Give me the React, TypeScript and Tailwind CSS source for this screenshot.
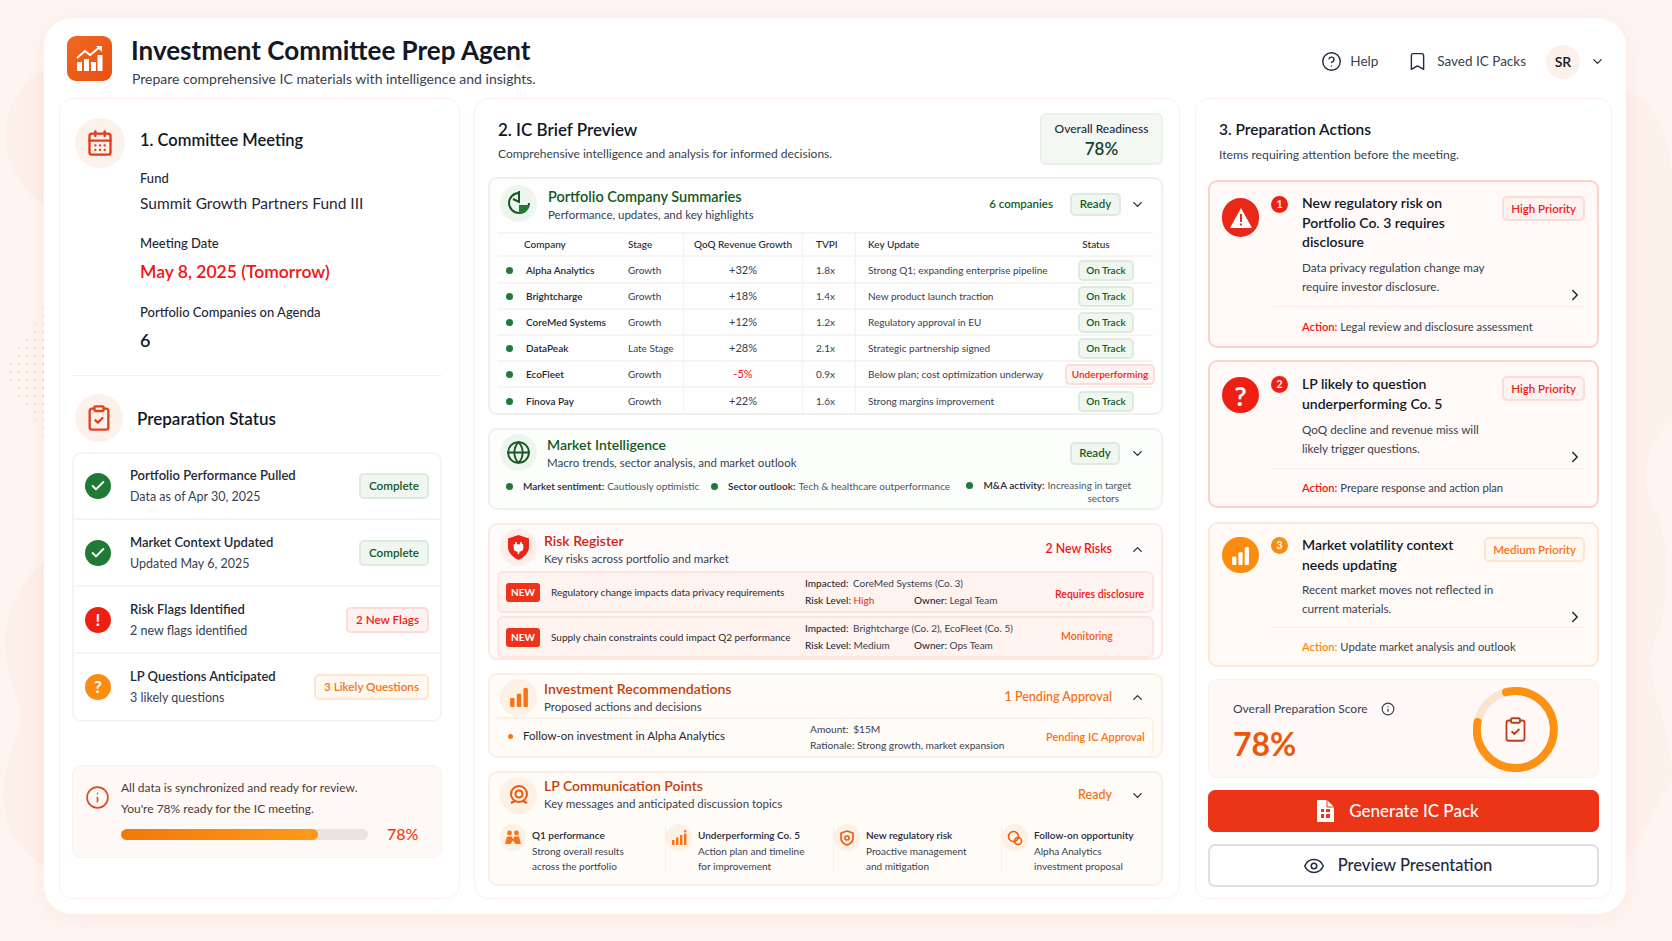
import React from "react";
import { Bookmark, CalendarDays, Check, ChevronDown, ChevronRight, ChevronUp, CircleHelp, ClipboardCheck, Eye, Globe, Info } from "lucide-react";

const Logo = () => (
  <svg width="27" height="27" viewBox="0 0 27 27" fill="none">
    <rect x="1" y="17" width="5" height="9" fill="#fff" />
    <rect x="8" y="14" width="5" height="12" fill="#fff" />
    <rect x="15" y="17" width="5" height="9" fill="#fff" />
    <rect x="21.5" y="10" width="5" height="16" fill="#fff" />
    <path d="M1 13 L9 6 L14 10 L24 2" stroke="#fff" strokeWidth="2" />
    <path d="M20 1 H26 V7 Z" fill="#fff" />
  </svg>
);

const Bars = ({ c = "#f97316", s = 18 }: { c?: string; s?: number }) => (
  <svg width={s} height={s} viewBox="0 0 18 18" fill={c}>
    <rect x="1" y="10" width="4" height="8" rx="1" />
    <rect x="7" y="6" width="4" height="12" rx="1" />
    <rect x="13" y="1" width="4" height="17" rx="1" />
  </svg>
);

const Badge = ({ tone, children, className = "" }: { tone: "g" | "r" | "o"; children: React.ReactNode; className?: string }) => {
  const t = tone === "g" ? "bg-[#f0f7f0] border-[#dcebdd] text-[#14591f]" : tone === "r" ? "bg-[#fff3f1] border-[#fbdcd7] text-[#ef1c12]" : "bg-[#fff8f1] border-[#fde5cf] text-[#f97316]";
  return <span className={`inline-flex items-center justify-center rounded-[5px] border-2 font-semibold whitespace-nowrap shrink-0 ${t} ${className}`}>{children}</span>;
};

const CircleIcon = ({ bg, children }: { bg: string; children: React.ReactNode }) => (
  <span className={`flex w-[26px] h-[26px] rounded-full items-center justify-center shrink-0 text-white font-bold text-[17px] ${bg}`}>{children}</span>
);

const statusRows = [
  { t: "Portfolio Performance Pulled", s: "Data as of Apr 30, 2025", bg: "bg-[#1f7a36]", icon: <Check size={16} strokeWidth={3} />, tone: "g" as const, b: "Complete", h: "h-[66px]" },
  { t: "Market Context Updated", s: "Updated May 6, 2025", bg: "bg-[#1f7a36]", icon: <Check size={16} strokeWidth={3} />, tone: "g" as const, b: "Complete", h: "h-[67px]" },
  { t: "Risk Flags Identified", s: "2 new flags identified", bg: "bg-[#ee2014]", icon: "!", tone: "r" as const, b: "2 New Flags", h: "h-[67px]" },
  { t: "LP Questions Anticipated", s: "3 likely questions", bg: "bg-[#fb8c0e]", icon: "?", tone: "o" as const, b: "3 Likely Questions", h: "h-[66px]" },
];

const LeftPanel = () => (
  <section className="w-[401px] h-[801px] rounded-[14px] border border-[#fdf0ea] bg-white pl-[12px] pr-[17px] pt-[19px] shrink-0">
    <div className="flex pl-[3px] gap-[15px]">
      <span className="w-[50px] h-[50px] rounded-full bg-[#fdf1ec] flex items-center justify-center shrink-0">
        <CalendarDays size={28} color="#e5391c" strokeWidth={2} />
      </span>
      <div className="pt-[10px]">
        <h2 className="text-[16.5px] leading-[24px] font-semibold text-[#111827]">1. Committee Meeting</h2>
        <p className="mt-[17px] text-[13px] leading-[18px] font-medium text-[#1f2937]">Fund</p>
        <p className="mt-[5px] text-[15.5px] leading-[22px] text-[#1f2937]">Summit Growth Partners Fund III</p>
        <p className="mt-[20px] text-[13px] leading-[18px] font-medium text-[#1f2937]">Meeting Date</p>
        <p className="mt-[7px] text-[17.5px] leading-[26px] font-semibold text-[#f41212]">May 8, 2025 (Tomorrow)</p>
        <p className="mt-[18px] text-[13px] leading-[18px] font-medium text-[#1f2937]">Portfolio Companies on Agenda</p>
        <p className="mt-[7px] text-[18px] leading-[24px] font-semibold text-[#111827]">6</p>
      </div>
    </div>
    <div className="mt-[23px] h-px bg-[#fbefea]" />
    <div className="mt-[18px] flex items-center pl-[3px] gap-[14px]">
      <span className="w-[48px] h-[48px] rounded-full bg-[#fdf1ec] flex items-center justify-center">
        <ClipboardCheck size={28} color="#e0431f" strokeWidth={2} />
      </span>
      <h2 className="text-[17px] mt-[1px] font-semibold text-[#111827]">Preparation Status</h2>
    </div>
    <div className="mt-[10px] rounded-[9px] border-2 border-[#f7f5f4] divide-y-2 divide-[#f7f5f4]">
      {statusRows.map((r) => (
        <div key={r.t} className={`${r.h} flex items-center pl-[11px] pr-[11px]`}>
          <CircleIcon bg={r.bg}>{r.icon}</CircleIcon>
          <div className="ml-[19px] flex-1">
            <p className="text-[13px] leading-[20px] font-semibold text-[#1f2937]">{r.t}</p>
            <p className="mt-[2px] text-[12.5px] leading-[20px] text-[#374151]">{r.s}</p>
          </div>
          <Badge tone={r.tone} className="h-[26px] px-[8px] text-[11.7px]">{r.b}</Badge>
        </div>
      ))}
    </div>
    <div className="mt-[43px] h-[93px] rounded-[9px] border border-[#fdf0ea] bg-[#fef8f6] flex pl-[12px] pt-[11px]">
      <Info size={25} color="#dd4b1c" strokeWidth={1.6} className="mt-[8px] shrink-0" />
      <div className="ml-[11px] flex-1">
        <p className="text-[12px] leading-[21px] text-[#4b3a3a]">All data is synchronized and ready for review.</p>
        <p className="text-[12px] leading-[21px] text-[#4b3a3a]">You're 78% ready for the IC meeting.</p>
        <div className="mt-[3px] flex items-center">
          <div className="w-[247px] h-[11px] rounded-full bg-[#eae3e0] overflow-hidden">
            <div className="w-[197px] h-full rounded-full bg-gradient-to-r from-[#ee7a0a] to-[#fd9a1c]" />
          </div>
          <span className="ml-[19px] text-[16px] font-medium text-[#ef3b14]">78%</span>
        </div>
      </div>
    </div>
  </section>
);

const companies = [
  ["Alpha Analytics", "Growth", "+32%", "1.8x", "Strong Q1; expanding enterprise pipeline", "On Track"],
  ["Brightcharge", "Growth", "+18%", "1.4x", "New product launch traction", "On Track"],
  ["CoreMed Systems", "Growth", "+12%", "1.2x", "Regulatory approval in EU", "On Track"],
  ["DataPeak", "Late Stage", "+28%", "2.1x", "Strategic partnership signed", "On Track"],
  ["EcoFleet", "Growth", "-5%", "0.9x", "Below plan; cost optimization underway", "Underperforming"],
  ["Finova Pay", "Growth", "+22%", "1.6x", "Strong margins improvement", "On Track"],
];

const gridCols = "grid grid-cols-[130px_55px_120px_52px_204px_94px]";

const Section = ({ h, border, bg, children }: { h: string; border: string; bg: string; children: React.ReactNode }) => (
  <div className={`rounded-[9px] border-2 ${h} ${border} ${bg}`}>{children}</div>
);

const SecHead = ({ icon, ibg, title, tc, sub, right, up, gap, im = "", tm = "", rm = "" }: { icon: React.ReactNode; ibg: string; title: string; tc: string; sub: string; right: React.ReactNode; up?: boolean; gap: string; im?: string; tm?: string; rm?: string }) => (
  <div className="flex items-center h-[36px] mt-[4px] pl-[10px] pr-[16px]">
    <div className={`flex flex-1 items-center ${gap}`}>
      <span className={`w-[37px] h-[37px] rounded-full flex items-center justify-center shrink-0 ${ibg} ${im}`}>{icon}</span>
      <div className={tm}>
        <h3 className={`leading-[18px] font-semibold ${tc}`}>{title}</h3>
        <p className="text-[11.5px] leading-[18px] text-[#374151]">{sub}</p>
      </div>
    </div>
    <div className={`flex items-center ${rm}`}>
      {right}
      {up ? <ChevronUp size={15} color="#1f2937" className="ml-[18px]" /> : <ChevronDown size={15} color="#1f2937" className="ml-[18px]" />}
    </div>
  </div>
);

const Dot = ({ c = "bg-[#1f7a36]", s = "w-[7px] h-[7px]" }: { c?: string; s?: string }) => <span className={`inline-block rounded-full shrink-0 ${s} ${c}`} />;

const RiskRow = ({ title, imp, level, levelC, owner, status, statusC, ml }: { title: string; imp: string; level: string; levelC: string; owner: string; status: string; statusC: string; ml: string }) => (
  <div className="h-[42px] rounded-[6px] border-2 border-[#fde6df] bg-[#fff3ef] flex items-center pl-[7px] text-[10px] text-[#1f2937]">
    <span className="w-[34px] h-[19px] rounded-[3px] bg-[#f0321a] text-white font-bold flex items-center justify-center shrink-0">NEW</span>
    <span className="ml-[11px] w-[254px] shrink-0 whitespace-nowrap">{title}</span>
    <div className="w-[250px] shrink-0 leading-[17px]">
      <p><span className="font-medium">Impacted:</span> <span className="ml-[2px] text-[#374151]">{imp}</span></p>
      <p className="flex"><span className="w-[109px]"><span className="font-medium">Risk Level:</span> <span className={levelC}>{level}</span></span><span><span className="font-medium">Owner:</span> <span className="text-[#374151]">{owner}</span></span></p>
    </div>
    <span className={`font-semibold whitespace-nowrap text-[10.5px] ${ml} ${statusC}`}>{status}</span>
  </div>
);

const points = [
  { t: "Q1 performance", a: "Strong overall results", b: "across the portfolio", i: <svg width="16" height="15" viewBox="0 0 16 15" fill="#f97316"><circle cx="4.5" cy="3" r="2.4" /><circle cx="11.5" cy="3" r="2.4" /><path d="M0 14 L2 6.5 H6.5 L8 9 L9.5 6.5 H14 L16 14 H10.5 L8 10.5 L5.5 14 Z" /></svg> },
  { t: "Underperforming Co. 5", a: "Action plan and timeline", b: "for improvement", i: <svg width="15" height="15" viewBox="0 0 15 15" fill="#f97316"><rect x="0" y="10" width="2.4" height="5" /><rect x="4" y="7.5" width="2.4" height="7.5" /><rect x="8" y="5" width="2.4" height="10" /><rect x="12" y="3.5" width="2.4" height="11.5" /><circle cx="13.2" cy="1.2" r="1.2" /></svg> },
  { t: "New regulatory risk", a: "Proactive management", b: "and mitigation", i: <svg width="14" height="16" viewBox="0 0 14 16" fill="none" stroke="#ea580c" strokeWidth="1.6"><path d="M7 1 L13 3 V8 C13 12 10 14 7 15 C4 14 1 12 1 8 V3 Z" /><circle cx="7" cy="8" r="2" /></svg> },
  { t: "Follow-on opportunity", a: "Alpha Analytics", b: "investment proposal", i: <svg width="16" height="16" viewBox="0 0 16 16" fill="none" stroke="#ea580c" strokeWidth="1.5"><circle cx="6.5" cy="6.5" r="5" /><circle cx="11" cy="11" r="3.5" /></svg> },
];

const MiddlePanel = () => (
  <section className="w-[706px] h-[801px] rounded-[14px] border border-[#fdf0ea] bg-white pl-[13px] pr-[16px] pt-[14px] shrink-0">
    <div className="flex justify-between pl-[10px] h-[52px]">
      <div className="pt-[5px]">
        <h2 className="text-[17px] leading-[24px] font-semibold text-[#111827]">2. IC Brief Preview</h2>
        <p className="mt-[3px] text-[12px] leading-[18px] text-[#374151]">Comprehensive intelligence and analysis for informed decisions.</p>
      </div>
      <div className="w-[123px] h-[52px] rounded-[6px] border-2 border-[#e9f1e9] bg-[#f3f8f3] text-center">
        <p className="mt-[5px] text-[12px] leading-[18px] font-medium text-[#1f2937]">Overall Readiness</p>
        <p className="text-[17px] leading-[21px] font-semibold text-[#14432a]">78%</p>
      </div>
    </div>
    <div className="mt-[12px] flex flex-col gap-[13px]">
      <Section h="h-[238px]" border="border-[#eef1ec]" bg="bg-[#fdfefd]">
        <SecHead
          gap="gap-[11px]" im="mt-[4px]" tm="mt-[9px]" rm="mt-[6px]"
          ibg="bg-[#eef5ee]"
          icon={<svg width="26" height="26" viewBox="0 0 26 26" fill="none"><path d="M13 3 A10 10 0 1 0 23 13" stroke="#14591f" strokeWidth="2" /><path d="M13 1 V12 L7 9" stroke="#14591f" strokeWidth="2" /><path d="M13 15 L23 15 C23 20 18 24 13 24 Z" fill="#1f7a36" /></svg>}
          title="Portfolio Company Summaries"
          tc="text-[14.5px] text-[#14591f]"
          sub="Performance, updates, and key highlights"
          right={<>
            <span className="text-[11.5px] font-semibold text-[#14591f] mr-[17px]">6 companies</span>
            <Badge tone="g" className="w-[51px] h-[23px] text-[11.5px] mr-[-9px]">Ready</Badge>
          </>}
        />
        <div className="mt-[13px] mx-[8px] text-[10px] text-[#1f2937]">
          <div className={`${gridCols} h-[25px] items-center border-y-2 border-[#f5f6f4] font-medium`}>
            <span className="pl-[26px]">Company</span>
            <span>Stage</span>
            <span className="h-full flex items-center justify-center border-x border-[#f1f2f0]">QoQ Revenue Growth</span>
            <span className="pl-[13px]">TVPI</span>
            <span className="h-full flex items-center pl-[12px] border-l border-[#f1f2f0]">Key Update</span>
            <span className="text-center pr-[20px]">Status</span>
          </div>
          <div className="pt-[1px]">
            {companies.map((c) => (
              <div key={c[0]} className={`${gridCols} h-[26px] items-center border-b-2 border-[#f5f6f4] last:border-b-0`}>
                <span className="pl-[8px] flex items-center gap-[13px] font-semibold whitespace-nowrap"><Dot />{c[0]}</span>
                <span className="text-[#374151] whitespace-nowrap">{c[1]}</span>
                <span className={`h-full flex items-center justify-center border-x border-[#f1f2f0] text-[11px] ${c[2] === "-5%" ? "text-[#f41212]" : "text-[#374151]"}`}>{c[2]}</span>
                <span className="pl-[13px] text-[#374151]">{c[3]}</span>
                <span className="h-full flex items-center pl-[12px] border-l border-[#f1f2f0] text-[#374151] whitespace-nowrap">{c[4]}</span>
                <span className="flex justify-center">
                  {c[5] === "On Track" ? <Badge tone="g" className="w-[56px] h-[21px] text-[10px]">On Track</Badge> : <Badge tone="r" className="w-[90px] h-[21px] text-[10px] ml-[8px]">Underperforming</Badge>}
                </span>
              </div>
            ))}
          </div>
        </div>
      </Section>

      <Section h="h-[82px]" border="border-[#eef1ec]" bg="bg-[#fcfefc]">
        <SecHead
          gap="gap-[10px]" tm="mt-[4px]" rm="mt-[2px]"
          ibg="bg-[#eef5ee]"
          icon={<Globe size={25} color="#14591f" strokeWidth={1.8} />}
          title="Market Intelligence"
          tc="text-[14px] text-[#14591f]"
          sub="Macro trends, sector analysis, and market outlook"
          right={<Badge tone="g" className="w-[50px] h-[23px] text-[11.5px] mr-[-8px]">Ready</Badge>}
        />
        <div className="mt-[9px] pl-[16px] flex text-[10px] leading-[13px] text-[#4b5563]">
          <div className="w-[205px] flex items-center gap-[10px] h-[14px]"><Dot /><span className="whitespace-nowrap"><b className="font-semibold text-[#1f2937] mr-[3px]">Market sentiment:</b>Cautiously optimistic</span></div>
          <div className="w-[255px] flex items-center gap-[10px] h-[14px]"><Dot /><span className="whitespace-nowrap"><b className="font-semibold text-[#1f2937] mr-[3px]">Sector outlook:</b>Tech &amp; healthcare outperformance</span></div>
          <div className="flex gap-[9px] w-[165px]"><Dot s="w-[7px] h-[7px] mt-[3px]" /><span className="text-right"><b className="font-semibold text-[#1f2937] mr-[3px]">M&amp;A activity:</b>Increasing in target <span className="pr-[12px]">sectors</span></span></div>
        </div>
      </Section>

      <Section h="h-[137px]" border="border-[#fde9e3]" bg="bg-[#fffbfa]">
        <SecHead
          gap="gap-[7px]" tm="mt-[5px]" rm="mt-[4px]"
          ibg="bg-[#fdeee9]"
          icon={<svg width="21" height="25" viewBox="0 0 21 25"><path d="M10.5 0 L21 3.5 V12 C21 18 16 22.5 10.5 25 C5 22.5 0 18 0 12 V3.5 Z" fill="#ea2618" /><path d="M8 7 V10 M13 7 V10 M6.5 10 H14.5 V13 C14.5 15 12.5 16 10.5 16 C8.5 16 6.5 15 6.5 13 Z M10.5 16 V19" stroke="#fff" strokeWidth="1.6" fill="#fff" /></svg>}
          title="Risk Register"
          tc="text-[14px] text-[#cf1f12]"
          sub="Key risks across portfolio and market"
          right={<span className="text-[12.3px] font-semibold text-[#f41212]">2 New Risks</span>}
          up
        />
        <div className="mt-[6px] mx-[7px] flex flex-col gap-[3px]">
          <RiskRow title="Regulatory change impacts data privacy requirements" imp="CoreMed Systems (Co. 3)" level="High" levelC="text-[#ea2618]" owner="Legal Team" status="Requires disclosure" statusC="text-[#f41212]" ml="mt-[5px]" />
          <RiskRow title="Supply chain constraints could impact Q2 performance" imp="Brightcharge (Co. 2), EcoFleet (Co. 5)" level="Medium" levelC="text-[#374151]" owner="Ops Team" status="Monitoring" statusC="text-[#f4600c]" ml="ml-[6px]" />
        </div>
      </Section>

      <Section h="h-[85px]" border="border-[#fdeee2]" bg="bg-[#fffbf7]">
        <SecHead
          gap="gap-[7px]" tm="mt-[2px]"
          ibg="bg-[#fdf0e4]"
          icon={<Bars s={20} />}
          title="Investment Recommendations"
          tc="text-[14px] text-[#c2410c]"
          sub="Proposed actions and decisions"
          right={<span className="text-[12.5px] font-semibold text-[#f97316]">1 Pending Approval</span>}
          up
        />
        <div className="mt-[2px] ml-[7px] mr-[7px] h-[38px] rounded-r-[6px] border-t-2 border-r-2 border-[#fdf0e4] flex items-center pl-[11px] text-[10.2px] text-[#374151]">
          <Dot c="bg-[#f97316]" s="w-[5px] h-[5px] mb-[2px]" />
          <span className="ml-[10px] w-[287px] text-[11.5px] mb-[2px] text-[#1f2937] shrink-0">Follow-on investment in Alpha Analytics</span>
          <div className="w-[236px] shrink-0 leading-[16px]">
            <p>Amount: <span className="ml-[2px]">$15M</span></p>
            <p>Rationale: Strong growth, market expansion</p>
          </div>
          <span className="font-semibold text-[#f97316] whitespace-nowrap text-[11px]">Pending IC Approval</span>
        </div>
      </Section>

      <Section h="h-[115px]" border="border-[#fdeee2]" bg="bg-[#fffbf7]">
        <SecHead
          gap="gap-[7px]"
          ibg="bg-[#fdf0e4]"
          icon={<svg width="22" height="22" viewBox="0 0 22 22" fill="none" stroke="#ea580c" strokeWidth="2"><circle cx="11" cy="10" r="8" /><circle cx="11" cy="10" r="3.5" /><path d="M3 19 L7 17 M19 19 L15 17" /></svg>}
          title="LP Communication Points"
          tc="text-[14px] text-[#c2410c]"
          sub="Key messages and anticipated discussion topics"
          right={<span className="text-[12.5px] font-semibold text-[#f97316]">Ready</span>}
        />
        <div className="mt-[11px] ml-[10px] grid grid-cols-[166px_168px_168px_1fr]">
          {points.map((p, i) => (
            <div key={p.t} className={`flex gap-[6px] h-[50px] ${i < 3 ? "border-r border-[#fbeee6]" : ""}`}>
              <span className="w-[26px] h-[27px] rounded-full bg-[#fdf0e4] flex items-center justify-center shrink-0">{p.i}</span>
              <div className="text-[10px] leading-[15px] text-[#374151] whitespace-nowrap">
                <p className="mt-[4px] font-semibold text-[#1f2937]">{p.t}</p>
                <p className="mt-[1px]">{p.a}</p>
                <p>{p.b}</p>
              </div>
            </div>
          ))}
        </div>
      </Section>
    </div>
  </section>
);

type CardProps = { h: string; border: string; bg: string; icon: React.ReactNode; iconBg: string; iconH: string; n: number; nBg: string; title: string[]; tone: "r" | "o"; pri: string; desc: string[]; action: string; actC: string; pt: string; iMt: string; bMt: string; dMt: string; divMt: string; aMt: string };

const ActionCard = ({ h, border, bg, icon, iconBg, iconH, n, nBg, title, tone, pri, desc, action, actC, pt, iMt, bMt, dMt, divMt, aMt }: CardProps) => (
  <div className={`${h} rounded-[9px] border-2 ${border} ${bg} flex pl-[12px] pr-[12px] ${pt}`}>
    <span className={`w-[37px] ${iconH} ${iMt} rounded-full flex items-center justify-center shrink-0 ${iconBg}`}>{icon}</span>
    <div className="ml-[12px] flex-1">
      <div className="flex">
        <span className={`w-[17px] h-[17px] ${bMt} rounded-full text-white text-[10.5px] font-bold flex items-center justify-center shrink-0 ${nBg}`}>{n}</span>
        <div className="ml-[14px] flex-1 text-[14px] leading-[19.5px] font-semibold text-[#111827]">
          {title.map((t) => <p key={t}>{t}</p>)}
        </div>
        <Badge tone={tone} className={`h-[25px] px-[7px] text-[11.5px] ${bMt}`}>{pri}</Badge>
      </div>
      <div className={`flex justify-between items-end ${dMt} pl-[31px] text-[11.7px] leading-[19px] text-[#374151]`}>
        <div>{desc.map((d) => <p key={d}>{d}</p>)}</div>
        <ChevronRight size={18} color="#1f2937" className="mr-[1px] mb-[-8px]" />
      </div>
      <div className={`${divMt} h-px bg-[#fdeae4]`} />
      <p className={`${aMt} pl-[31px] text-[11.2px] leading-[20px] text-[#374151]`}><span className={`font-semibold ${actC}`}>Action:</span> {action}</p>
    </div>
  </div>
);

const RightPanel = () => (
  <section className="w-[417px] h-[801px] rounded-[14px] border border-[#fdf0ea] bg-white pl-[12px] pr-[12px] pt-[18px] shrink-0">
    <h2 className="pl-[11px] text-[15.5px] leading-[24px] font-semibold text-[#111827]">3. Preparation Actions</h2>
    <p className="mt-[5px] pl-[11px] text-[12.2px] leading-[18px] text-[#374151]">Items requiring attention before the meeting.</p>
    <div className="mt-[16px] flex flex-col gap-[12px]">
      <ActionCard h="h-[168px]" border="border-[#fdd2cb]" bg="bg-[#fff9f7]" pt="pt-[11px]" iMt="mt-[5px]" bMt="mt-[3px]" iconH="h-[39px]" iconBg="bg-[#e8291a]" nBg="bg-[#ee2014]" n={1}
        icon={<svg width="22" height="20" viewBox="0 0 22 20"><path d="M11 0 L22 20 H0 Z" fill="#fff" /><rect x="10" y="6" width="2" height="8" fill="#e8291a" /><rect x="10" y="15.5" width="2" height="2" fill="#e8291a" /></svg>}
        title={["New regulatory risk on", "Portfolio Co. 3 requires", "disclosure"]} tone="r" pri="High Priority"
        desc={["Data privacy regulation change may", "require investor disclosure."]} dMt="mt-[6px]" divMt="mt-[10px]" aMt="mt-[10px]" action="Legal review and disclosure assessment" actC="text-[#f41212]" />
      <ActionCard h="h-[148px]" border="border-[#fdd2cb]" bg="bg-[#fff9f7]" pt="pt-[12px]" iMt="mt-[3px]" bMt="mt-[2px]" iconH="h-[36px]" iconBg="bg-[#ee2014]" nBg="bg-[#ee2014]" n={2}
        icon={<span className="text-white text-[27px] font-bold leading-none">?</span>}
        title={["LP likely to question", "underperforming Co. 5"]} tone="r" pri="High Priority"
        desc={["QoQ decline and revenue miss will", "likely trigger questions."]} dMt="mt-[7px]" divMt="mt-[10px]" aMt="mt-[9px]" action="Prepare response and action plan" actC="text-[#f41212]" />
      <div className="mt-[2px]">
        <ActionCard h="h-[145px]" border="border-[#fde8d8]" bg="bg-[#fffaf6]" pt="pt-[11px]" iMt="mt-[2px]" bMt="mt-[2px]" iconH="h-[36px]" iconBg="bg-[#fb8c0e]" nBg="bg-[#fb8c0e]" n={3}
          icon={<Bars c="#fff" s={19} />}
          title={["Market volatility context", "needs updating"]} tone="o" pri="Medium Priority"
          desc={["Recent market moves not reflected in", "current materials."]} dMt="mt-[6px]" divMt="mt-[9px]" aMt="mt-[9px]" action="Update market analysis and outlook" actC="text-[#f98a12]" />
      </div>
    </div>
    <div className="mt-[12px] h-[99px] rounded-[9px] border border-[#fdf0ea] bg-[#fff8f6] flex justify-between pl-[24px] pr-[40px] pt-[7px]">
      <div className="pt-[13px]">
        <p className="flex items-center text-[12px] leading-[18px] text-[#374151]">Overall Preparation Score <Info size={14} className="ml-[13px] mb-[1px]" /></p>
        <p className="mt-[5px] text-[32px] leading-[42px] font-bold text-[#ea580c]">78%</p>
      </div>
      <div className="relative w-[85px] h-[85px]">
        <svg width="85" height="85" viewBox="0 0 85 85" fill="none">
          <circle cx="42.5" cy="42.5" r="38.5" stroke="#fbe3cf" strokeWidth="8" />
          <path d="M 33 5.2 A 38.5 38.5 0 1 1 4.6 35" stroke="#fb9214" strokeWidth="8" strokeLinecap="round" />
        </svg>
        <ClipboardCheck size={27} color="#b5401a" strokeWidth={1.6} className="absolute left-[29px] top-[29px]" />
      </div>
    </div>
    <div className="mt-[12px] h-[42px] rounded-[7px] bg-[#ea3516] border border-[#f5301a] flex items-center justify-center gap-[15px] pr-[12px] text-white text-[17px] font-medium">
      <svg width="18" height="22" viewBox="0 0 18 22"><path d="M1 0 H11 L18 7 V22 H1 Z" fill="#fff" /><path d="M11 0 V7 H18" fill="none" stroke="#ea3516" strokeWidth="1" /><path d="M5 9 H8 V12 H5 Z M10 9 H14 V12 H10 Z M5 14 H8 V18 H5 Z M10 14 H14 V18 H10 Z" fill="#ea3516" /></svg>
      Generate IC Pack
    </div>
    <div className="mt-[12px] h-[43px] rounded-[7px] border-2 border-[#dcdfe4] bg-white flex items-center justify-center gap-[13px] pr-[12px] text-[#1f2a44] text-[16.5px] font-medium">
      <Eye size={22} strokeWidth={1.7} />
      Preview Presentation
    </div>
  </section>
);

const Decor = () => {
  const dots: React.ReactNode[] = [];
  for (let r = 0; r < 20; r++) {
    for (let c = 0; c < 6; c++) {
      const dist = Math.abs(r - 10);
      if (c + 1 < 6 - dist * 0.6 && dist < 10) {
        dots.push(<circle key={`${r}-${c}`} cx={43 - c * 8} cy={292 + r * 8} r="1" fill="#f9c9b8" opacity={0.8 - dist * 0.05} />);
      }
    }
  }
  return (
    <svg className="absolute inset-0" width="1672" height="941" viewBox="0 0 1672 941" fill="none">
      <path d="M44 70 C15 85 5 115 6 140 C8 170 25 190 44 205 Z" fill="#fdefe9" />
      <path d="M44 560 C15 590 0 620 6 660 C10 690 25 700 18 730 C8 760 -5 790 10 830 C20 850 35 860 44 865 Z" fill="#fdefe9" />
      <path d="M1626 90 C1655 100 1672 140 1672 180 V420 C1650 440 1640 470 1650 500 C1672 540 1672 600 1655 640 C1640 680 1672 720 1672 780 L1626 860 Z" fill="#fdf1ec" />
      {dots}
    </svg>
  );
};

export default function App() {
  return (
    <div className="relative w-[1672px] h-[941px] overflow-hidden bg-[#fef5f1] [font-family:Lato,'Noto_Sans',sans-serif]">
      <Decor />
      <main className="relative mx-[44px] mt-[18px] h-[896px] w-[1582px] rounded-[28px] bg-white shadow-[0_4px_24px_rgba(240,150,120,0.12)]">
        <header className="h-[80px] flex pl-[23px] pr-[21px] pt-[18px]">
          <span className="w-[45px] h-[45px] rounded-[9px] bg-gradient-to-br from-[#ee6a22] to-[#e84e10] flex items-center justify-center shrink-0"><Logo /></span>
          <div className="ml-[19px] mt-[-4px]">
            <h1 className="text-[26px] leading-[36px] font-bold text-[#111827]">Investment Committee Prep Agent</h1>
            <p className="mt-[1px] ml-[1px] text-[14px] leading-[20px] text-[#374151]">Prepare comprehensive IC materials with intelligence and insights.</p>
          </div>
          <div className="ml-auto flex items-center h-[45px] mt-[3px] text-[13.5px] text-[#374151]">
            <CircleHelp size={21} strokeWidth={1.6} color="#1f2a44" />
            <span className="ml-[8px]">Help</span>
            <Bookmark size={21} strokeWidth={1.6} color="#1f2a44" className="ml-[29px]" />
            <span className="ml-[9px]">Saved IC Packs</span>
            <span className="ml-[20px] w-[34px] h-[34px] rounded-full bg-[#fdf1ec] flex items-center justify-center text-[14px] font-semibold text-[#111827]">SR</span>
            <ChevronDown size={15} color="#1f2a44" className="ml-[10px]" />
          </div>
        </header>
        <div className="flex pl-[15px]">
          <LeftPanel />
          <div className="ml-[14px]"><MiddlePanel /></div>
          <div className="ml-[15px]"><RightPanel /></div>
        </div>
      </main>
    </div>
  );
}
